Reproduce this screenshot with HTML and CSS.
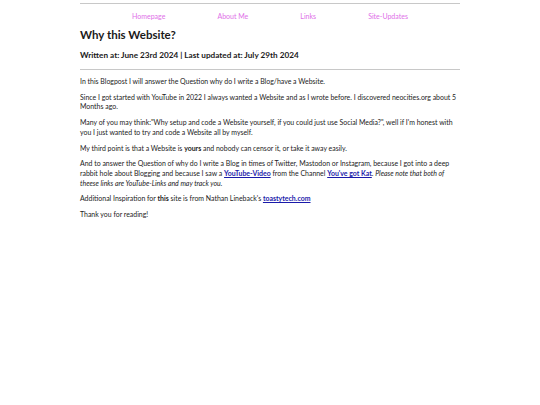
FILE: index.html
```html
<!DOCTYPE html>
<html>
<head>
<meta charset="utf-8">
<link rel="stylesheet" href="styles.css">
</head>
<body>
<div class="page">
  <nav class="nav">
    <a href="#">Homepage</a>
    <a href="#">About Me</a>
    <a href="#">Links</a>
    <a href="#">Site-Updates</a>
  </nav>
  <h1 class="title">Why this Website?</h1>
  <h2 class="meta">Written at: June 23rd 2024 | Last updated at: July 29th 2024</h2>
  <hr class="rule">
  <p>In this Blogpost I will answer the Question why do I write a Blog/have a Website.</p>
  <p>Since I got started with YouTube in 2022 I always wanted a Website and as I wrote before. I discovered neocities.org about 5 Months ago.</p>
  <p>Many of you may think:"Why setup and code a Website yourself, if you could just use Social Media?", well if I'm honest with you I just wanted to try and code a Website all by myself.</p>
  <p>My third point is that a Website is <b>yours</b> and nobody can censor it, or take it away easily.</p>
  <p>And to answer the Question of why do I write a Blog in times of Twitter, Mastodon or Instagram, because I got into a deep rabbit hole about Blogging and because I saw a <a class="link" href="#">YouTube-Video</a> from the Channel <a class="link" href="#">You've got Kat</a>. <i>Please note that both of theese links are YouTube-Links and may track you.</i></p>
  <p>Additional Inspiration for <b>this</b> site is from Nathan Lineback's <a class="link" href="#">toastytech.com</a></p>
  <p>Thank you for reading!</p>
</div>
</body>
</html>
```
FILE: styles.css
```css
body {
  margin: 0;
  background: #fff;
  font-family: "Lato", "Open Sans", sans-serif;
  color: #222;
}
.page {
  width: 380px;
  margin: 3px auto 0;
  border-top: 1px solid #c8c8c8;
}
.nav {
  display: flex;
  justify-content: space-evenly;
  padding-top: 8px;
  font-size: 7px;
  line-height: 9px;
}
.nav a {
  color: #e070e8;
  text-decoration: none;
}
.title {
  font-size: 11.5px;
  line-height: 14px;
  font-weight: 700;
  margin: 7px 0 0;
  color: #1a1a1a;
}
.meta {
  font-size: 8.2px;
  line-height: 10px;
  font-weight: 700;
  margin: 8px 0 0;
  color: #1a1a1a;
}
.rule {
  border: 0;
  border-top: 1px solid #c8c8c8;
  margin: 9px 0 0;
}
p {
  font-size: 6.95px;
  line-height: 9.7px;
  margin: 6px 0 0;
}
p:first-of-type {
  margin-top: 7px;
}
.link {
  color: #1a1aaa;
  font-weight: 700;
  text-decoration: underline;
}
```
